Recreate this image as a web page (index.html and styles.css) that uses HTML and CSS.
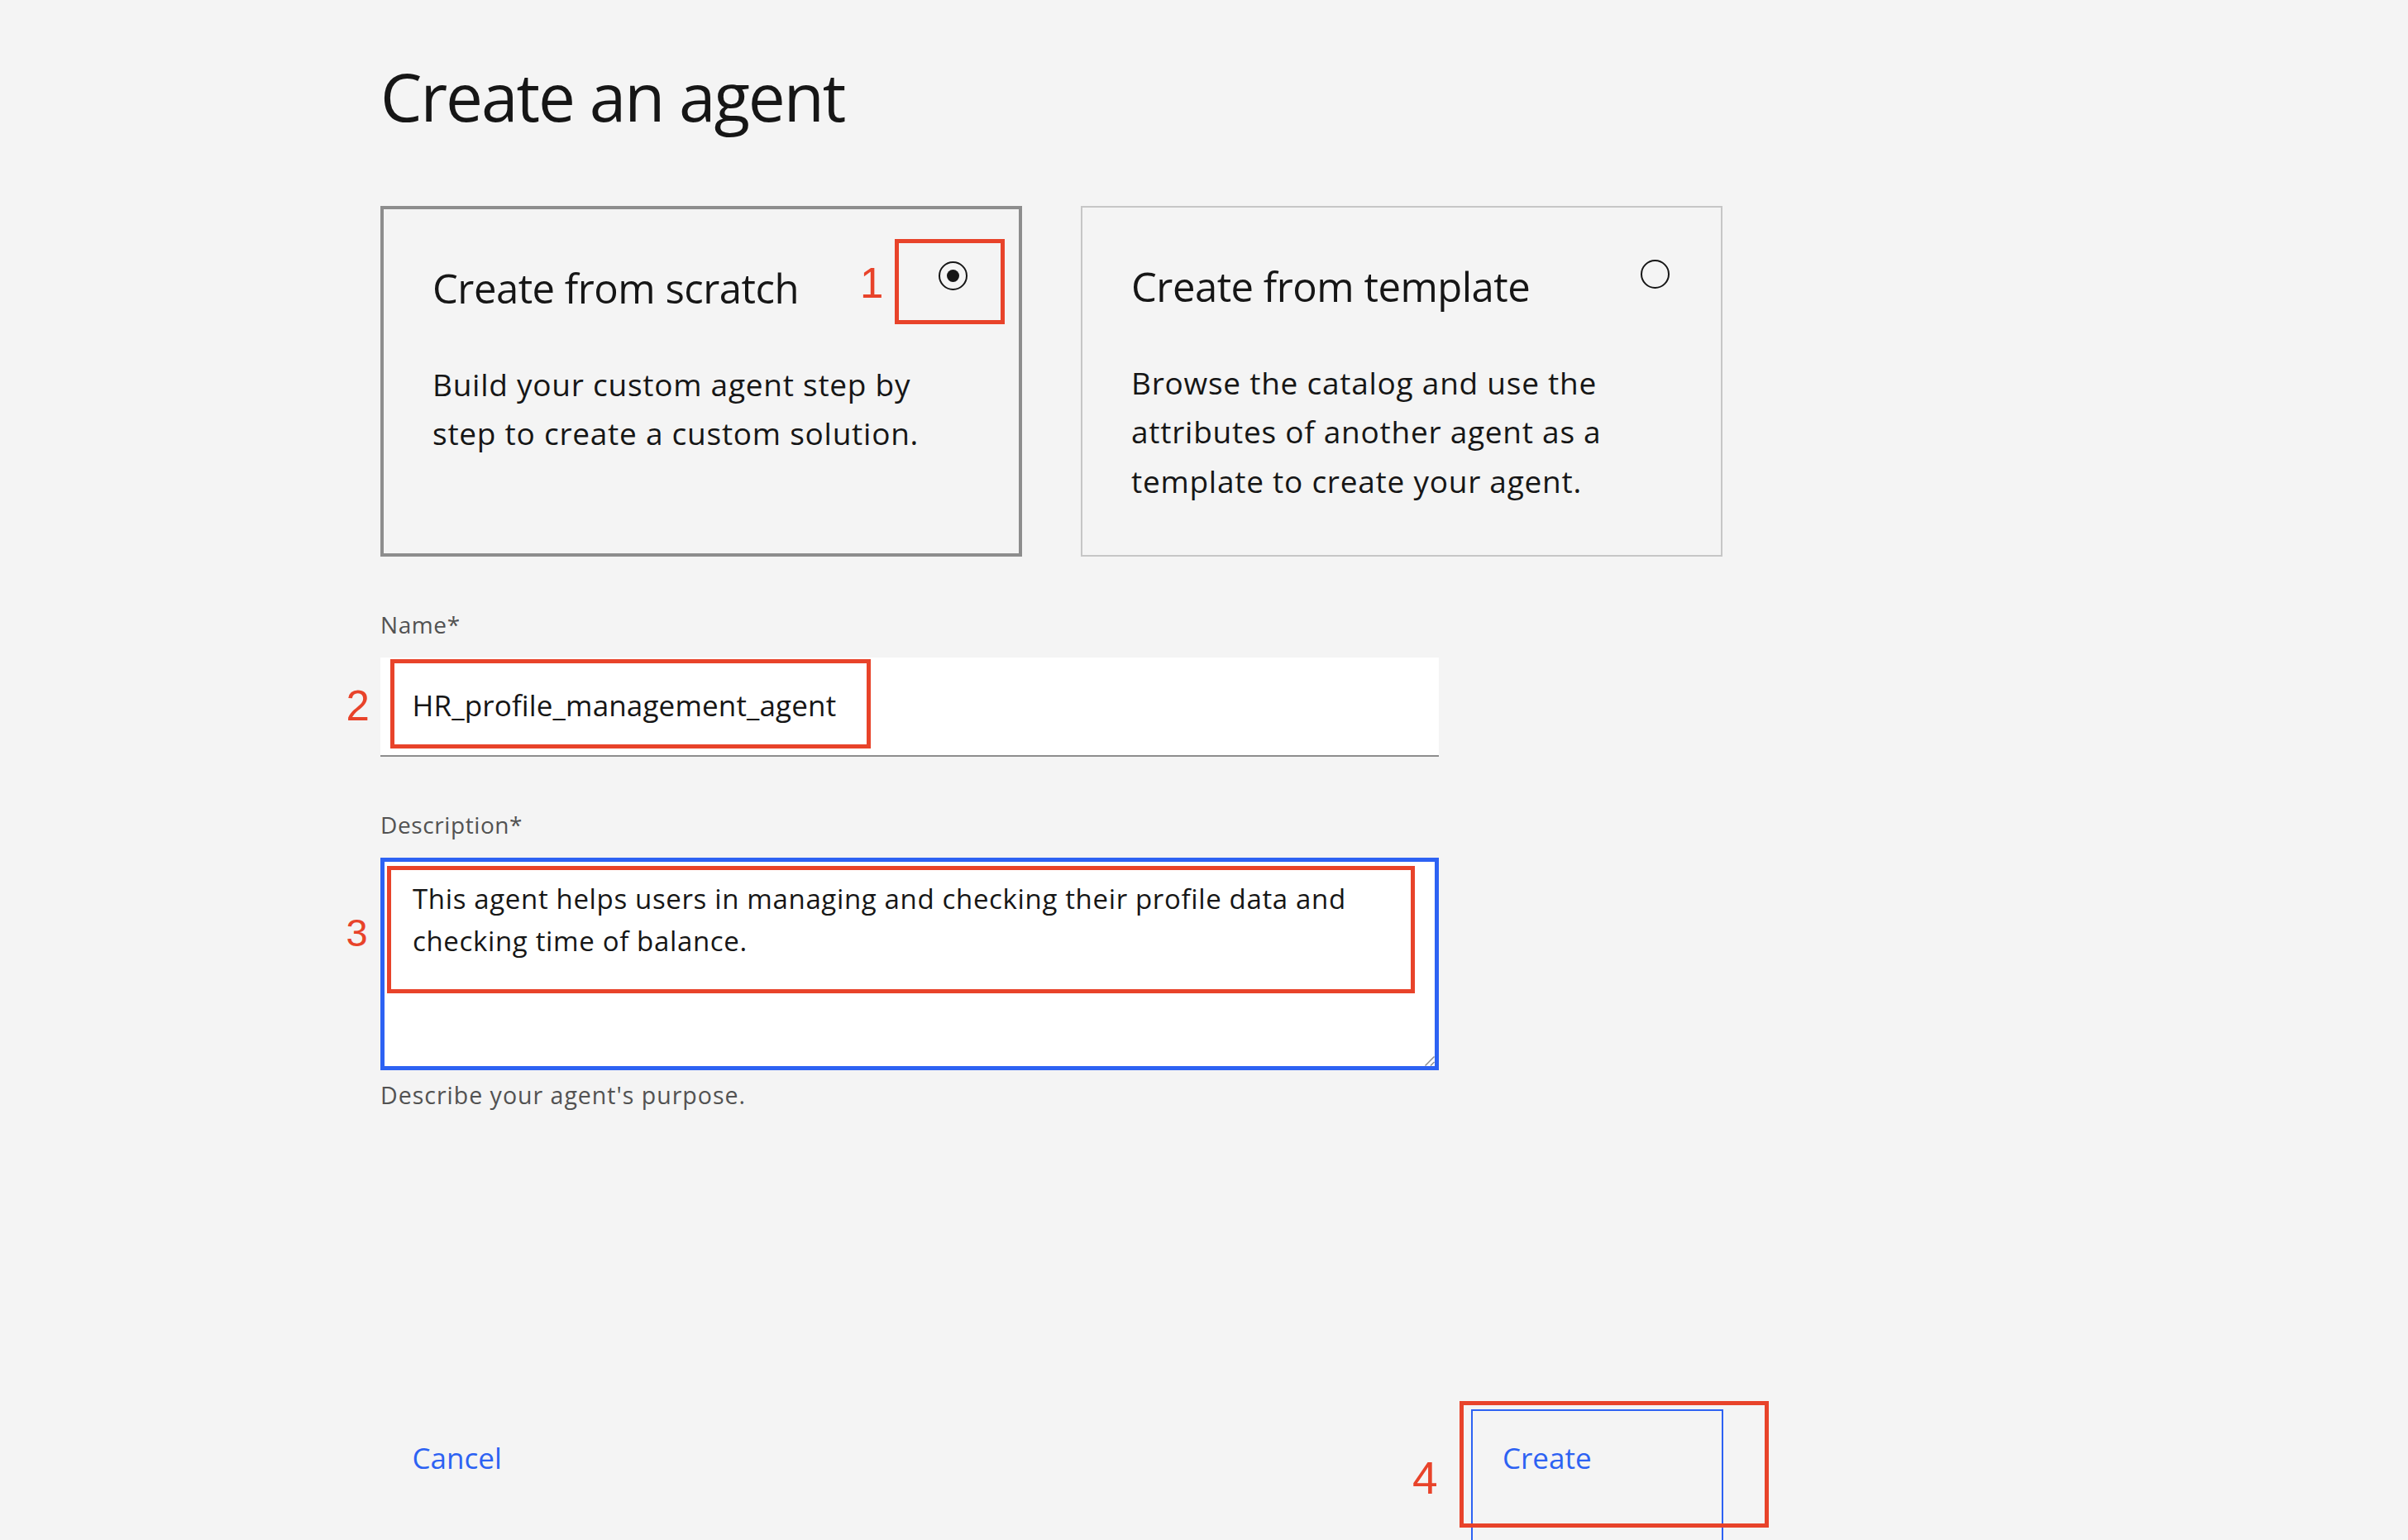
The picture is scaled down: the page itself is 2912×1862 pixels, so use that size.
FILE: index.html
```html
<!DOCTYPE html>
<html lang="en">
<head>
<meta charset="utf-8">
<title>Create an agent</title>
<link rel="stylesheet" href="styles.css">
</head>
<body>
<main class="page">
  <h1 class="title">Create an agent</h1>

  <div class="cards">
    <div class="card card--selected">
      <div class="card__head">
        <h2 class="card__title">Create from scratch</h2>
        <span class="radio radio--checked"></span>
      </div>
      <p class="card__body">Build your custom agent step by<br>step to create a custom solution.</p>
      <span class="callout callout--1"></span>
      <span class="mark mark--1">1</span>
    </div>
    <div class="card">
      <div class="card__head">
        <h2 class="card__title">Create from template</h2>
        <span class="radio"></span>
      </div>
      <p class="card__body">Browse the catalog and use the<br>attributes of another agent as a<br>template to create your agent.</p>
    </div>
  </div>

  <div class="field field--name">
    <span class="label">Name*</span>
    <div class="input">
      <span class="input__value">HR_profile_management_agent</span>
      <span class="callout callout--2"></span>
      <span class="mark mark--2">2</span>
    </div>
  </div>

  <div class="field field--desc">
    <span class="label">Description*</span>
    <div class="textarea-wrap">
      <div class="textarea">This agent helps users in managing and checking their profile data and<br>checking time of balance.</div>
      <svg class="resize" width="12" height="12" viewBox="0 0 12 12" aria-hidden="true">
        <line x1="0.5" y1="11.5" x2="11.5" y2="0.5"/>
        <line x1="7" y1="11.5" x2="11.5" y2="7"/>
      </svg>
      <span class="callout callout--3"></span>
      <span class="mark mark--3">3</span>
    </div>
    <p class="helper">Describe your agent's purpose.</p>
  </div>

  <footer class="actions">
    <button class="btn btn--ghost" type="button">Cancel</button>
    <div class="create-wrap">
      <button class="btn btn--create" type="button">Create</button>
      <span class="callout callout--4"></span>
      <span class="mark mark--4">4</span>
    </div>
  </footer>
</main>
</body>
</html>
```
FILE: styles.css
```css
html, body {
  margin: 0;
  height: 1862px;
  overflow: hidden;
  background: #f4f4f4;
}
body {
  font-family: "Open Sans", "Noto Sans", sans-serif;
  color: #161616;
}
.page {
  padding-left: 460px;
}
.title {
  margin: 68px 0 0;
  font-size: 80px;
  line-height: 96px;
  font-weight: 400;
  letter-spacing: -2px;
}
.cards {
  display: flex;
  gap: 71px;
  margin-top: 85px;
}
.card {
  position: relative;
  box-sizing: border-box;
  width: 776px;
  height: 424px;
  border: 2px solid #c6c6c6;
  padding: 63px 62px 0 59px;
}
.card--selected {
  border: 4px solid #8d8d8d;
}
.card__head {
  display: flex;
  justify-content: space-between;
  align-items: flex-start;
}
.card__title {
  margin: 2px 0 0;
  font-size: 49px;
  line-height: 60px;
  font-weight: 400;
  letter-spacing: -0.5px;
  white-space: nowrap;
}
.radio {
  flex: none;
  box-sizing: border-box;
  width: 35px;
  height: 35px;
  border: 2px solid #161616;
  border-radius: 50%;
  display: flex;
  align-items: center;
  justify-content: center;
}
.radio--checked::after {
  content: "";
  width: 15px;
  height: 15px;
  border-radius: 50%;
  background: #161616;
}
.card__body {
  margin: 56.5px 0 0;
  font-size: 37px;
  line-height: 59.5px;
  letter-spacing: 0.75px;
  white-space: nowrap;
}
.mark {
  position: absolute;
  font-family: "Liberation Sans", Arial, sans-serif;
  color: #e8432a;
  line-height: 1;
}
.callout {
  position: absolute;
  box-sizing: border-box;
  border: 5px solid #e8432a;
}
.callout--1 { left: 618px; top: 36px; width: 133px; height: 103px; }
.mark--1 { left: 576px; top: 64px; font-size: 51px; }

.field--name { margin-top: 62px; }
.field--desc { margin-top: 62px; }
.label {
  display: block;
  font-size: 28px;
  line-height: 40px;
  letter-spacing: 0.6px;
  color: #525252;
}
.input {
  position: relative;
  box-sizing: border-box;
  margin-top: 20px;
  width: 1280px;
  height: 120px;
  background: #fff;
  border-bottom: 2px solid #8d8d8d;
  padding: 33px 0 0 38.5px;
  font-size: 35px;
  line-height: 50px;
  letter-spacing: 0.15px;
  white-space: nowrap;
}
.callout--2 { left: 12px; top: 2px; width: 581px; height: 108px; }
.mark--2 { left: -41.5px; top: 33px; font-size: 51px; letter-spacing: 0; }

.textarea-wrap {
  position: relative;
  margin-top: 20px;
  width: 1280px;
  height: 256.5px;
}
.textarea {
  box-sizing: border-box;
  height: 100%;
  background: #fff;
  border: 5px solid #2d62f3;
  padding: 19.8px 0 0 34px;
  font-size: 33px;
  line-height: 50.7px;
  letter-spacing: 0.65px;
  white-space: nowrap;
}
.resize {
  position: absolute;
  right: 5px;
  bottom: 5px;
  stroke: #8d8d8d;
  stroke-width: 1.5;
}
.callout--3 { left: 8px; top: 10px; width: 1243px; height: 154px; }
.mark--3 { left: -41.5px; top: 66.5px; font-size: 47px; }

.helper {
  margin: 10.5px 0 0;
  font-size: 28.5px;
  line-height: 40px;
  letter-spacing: 1px;
  color: #525252;
}
.actions {
  display: flex;
  justify-content: space-between;
  align-items: flex-start;
  width: 1624px;
  margin-top: 360px;
}
.btn {
  font-family: inherit;
  font-size: 35px;
  line-height: 50px;
  color: #2d62f3;
  background: transparent;
  cursor: pointer;
  display: flex;
  align-items: flex-start;
}
.btn--ghost {
  border: 0;
  padding: 34px 0 0 38.5px;
}
.create-wrap {
  position: relative;
}
.btn--create {
  box-sizing: border-box;
  width: 305px;
  height: 200px;
  border: 2px solid #2d62f3;
  padding: 32px 0 0 36px;
}
.callout--4 { left: -14px; top: -10px; width: 374px; height: 153px; }
.mark--4 { left: -71px; top: 56px; font-size: 55px; }
```
